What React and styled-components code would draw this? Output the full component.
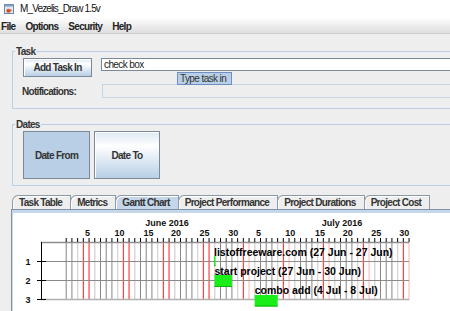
import React from "react";
import styled, { createGlobalStyle } from "styled-components";

const GlobalStyle = createGlobalStyle`
  html, body {
    margin: 0;
    padding: 0;
    background: #eeeeee;
    overflow: hidden;
  }
  body {
    font-family: "Liberation Sans", Arial, sans-serif;
  }
`;

const Window = styled.div`
  width: 450px;
  height: 311px;
  overflow: hidden;
  background: #eeeeee;
  display: flex;
  flex-direction: column;
`;

const TitleBar = styled.div`
  flex: none;
  height: 17px;
  background: #ffffff;
  display: flex;
  align-items: center;
  gap: 6px;
  padding-left: 4px;
  font-size: 10px;
  letter-spacing: -0.85px;
  color: #111;
`;

const MenuBar = styled.div`
  flex: none;
  height: 17px;
  box-sizing: border-box;
  border-bottom: 1px solid #cdcdcd;
  background: linear-gradient(#ffffff 0%, #f7f7f7 25%, #dedede 100%);
  display: flex;
  align-items: center;
  gap: 10px;
  padding: 2px 0 0 1px;
`;

const MenuItem = styled.span`
  font-size: 10px;
  font-weight: bold;
  letter-spacing: -0.7px;
  color: #222;
`;

const Main = styled.div`
  flex: 1;
  display: flex;
  flex-direction: column;
  padding: 12px 0 0 11px;
`;

const Group = styled.fieldset`
  margin: ${(p) => p.$top}px 0 0 1px;
  padding: ${(p) => p.$padTop}px 0 ${(p) => p.$padBottom}px 2px;
  width: 460px;
  min-width: 0;
  border: 1px solid #b8cfe5;
  box-sizing: border-box;
`;

const Legend = styled.legend`
  padding: 0 1px;
  margin-left: 0;
  font-size: 10px;
  line-height: 11px;
  font-weight: bold;
  letter-spacing: -0.7px;
  color: #333;
`;

const Row = styled.div`
  display: flex;
  align-items: ${(p) => p.$align || "flex-start"};
  gap: ${(p) => p.$gap || 0}px;
  padding-left: ${(p) => p.$indent}px;
  margin-top: ${(p) => p.$top || 0}px;
`;

const Button = styled.div`
  flex: none;
  width: ${(p) => p.$w}px;
  height: ${(p) => p.$h}px;
  box-sizing: border-box;
  border: 1px solid #7a8a99;
  background: ${(p) =>
    p.$pressed
      ? "#b8cfe5"
      : "linear-gradient(#dde8f3 0%, #ffffff 30%, #b8cfe5 100%)"};
  box-shadow: ${(p) => (p.$pressed ? "none" : "inset 1px 1px 0 #ffffff")};
  display: flex;
  align-items: center;
  justify-content: center;
  font-size: 10px;
  font-weight: bold;
  letter-spacing: -0.7px;
  color: #333;
`;

const FieldWrap = styled.div`
  flex: 1;
  position: relative;
`;

const TextField = styled.div`
  height: 13px;
  box-sizing: border-box;
  border: 1px solid #7a8a99;
  border-right: none;
  background: #ffffff;
  padding-left: 2px;
  font-size: 10px;
  line-height: 11px;
  letter-spacing: -0.6px;
  color: #222;
`;

const Tooltip = styled.div`
  position: absolute;
  left: 76px;
  top: 14px;
  width: 55px;
  height: 13px;
  box-sizing: border-box;
  border: 1px solid #6f8fc4;
  background: #b8cfe5;
  font-size: 10px;
  line-height: 11px;
  letter-spacing: -0.6px;
  padding-left: 2px;
  color: #333;
  white-space: nowrap;
`;

const FieldLabel = styled.span`
  flex: none;
  width: 80px;
  font-size: 10px;
  font-weight: bold;
  letter-spacing: -0.7px;
  color: #333;
`;

const DisabledField = styled.div`
  flex: 1;
  height: 14px;
  box-sizing: border-box;
  border: 1px solid #c4d5e6;
  border-right: none;
  background: #eeeeee;
`;

const TabRow = styled.div`
  display: flex;
  align-items: flex-end;
  margin-top: 9px;
  padding-left: 1px;
  height: 14px;
`;

const Tab = styled.div`
  height: 14px;
  box-sizing: border-box;
  padding: 0 8px 0 6px;
  margin-right: -1px;
  border: 1px solid #8c99a6;
  border-bottom: none;
  border-top-left-radius: 6px 7px;
  background: ${(p) => (p.$active ? "#c3d6ea" : "#eeeeee")};
  box-shadow: inset 1px 1px 0 #ffffff;
  display: flex;
  align-items: center;
  font-size: 10px;
  font-weight: bold;
  letter-spacing: -0.7px;
  color: #333;
  white-space: nowrap;
`;

const TabBody = styled.div`
  flex: 1;
  border-top: 1px solid #7f92a8;
  border-left: 1px solid #7f92a8;
  background: #c6d7e9;
  padding: 3px 0 0 1px;
  width: 460px;
`;

const ChartArea = styled.div`
  background: #ffffff;
  height: 100%;
`;

const AppIcon = () => (
  <svg width="10" height="10" viewBox="0 0 10 10">
    <rect x="0.5" y="0.5" width="9" height="9" fill="#e4ecf6" stroke="#6d87ad" />
    <rect x="0.5" y="0.5" width="9" height="2" fill="#7d9bc8" />
    <path d="M2.5 5.2h4v2.2a1.4 1.4 0 0 1-1.4 1.2H3.9a1.4 1.4 0 0 1-1.4-1.2z" fill="#d2461e" />
    <path d="M6.5 5.8h0.8a0.8 0.8 0 0 1 0 1.4H6.5" fill="none" stroke="#d2461e" strokeWidth="0.7" />
    <path d="M4 3.6c-.4.5.4.7 0 1.2M5.2 3.6c-.4.5.4.7 0 1.2" stroke="#f08a3c" strokeWidth="0.5" fill="none" />
  </svg>
);

const X0 = 66.2;
const DAY = 40 / 7;
const dayX = (i) => X0 + DAY * i;

function lineColor(i) {
  const wd = (3 + i) % 7;
  if (wd === 6) return "#ff1a1a";
  if (wd === 0) return i < 30 ? "#ff1a1a" : "#ffb2b2";
  if (wd === 1 || wd === 5) return "#d6d6d6";
  return "#858585";
}

const dayLabels = [
  ["5", 87.5], ["10", 119.5], ["15", 148.5], ["20", 176], ["25", 204.5], ["30", 233.3],
  ["5", 258.5], ["10", 290.3], ["15", 320], ["20", 347.7], ["25", 376.3], ["30", 404.3],
];

const rows = [261, 280, 299];

const tasks = [
  { label: "listoffreeware.com (27 Jun - 27 Jun)", x: 214, w: 1.5, y: 256, h: 10, base: 255.5 },
  { label: "start project (27 Jun - 30 Jun)", x: 214.5, w: 17.4, y: 275, h: 12, base: 274.5 },
  { label: "combo add (4 Jul - 8 Jul)", x: 254.7, w: 23, y: 295, h: 11.5, base: 294 },
];

const GanttChart = () => {
  const days = Array.from({ length: 61 }, (_, i) => i);
  return (
    <svg width="437" height="98" viewBox="13 213 437 98" style={{ display: "block" }}>
      <g fontFamily="Liberation Sans, Arial, sans-serif" fontWeight="bold" fill="#111">
        <text x="167" y="225.5" fontSize="9" textAnchor="middle">June 2016</text>
        <text x="342" y="225.5" fontSize="9" textAnchor="middle">July 2016</text>
        {dayLabels.map(([t, x], k) => (
          <text key={k} x={x} y="235.5" fontSize="9" textAnchor="middle">{t}</text>
        ))}
      </g>
      {days.map((i) => (
        <line
          key={i}
          x1={dayX(i)}
          x2={dayX(i)}
          y1="242"
          y2="300"
          stroke={lineColor(i)}
          strokeWidth={lineColor(i) === "#d6d6d6" ? 1.4 : 1}
        />
      ))}
      <line x1="41" x2="409" y1="242.5" y2="242.5" stroke="#8e8e8e" strokeWidth="1.6" />
      <line x1="41" x2="409" y1="261.5" y2="261.5" stroke="#8a8a8a" strokeWidth="1" />
      <line x1="41" x2="409" y1="280.5" y2="280.5" stroke="#8a8a8a" strokeWidth="1" />
      <line x1="41" x2="409" y1="299.5" y2="299.5" stroke="#b0b0b0" strokeWidth="1.5" />
      {days.map((i) => (
        <line key={"t" + i} x1={dayX(i)} x2={dayX(i)} y1="238" y2="242" stroke="#000" />
      ))}
      <line x1="41.5" x2="41.5" y1="242" y2="300" stroke="#000" />
      {rows.map((y, k) => (
        <g key={k}>
          <line x1="37" x2="46" y1={y + 0.5} y2={y + 0.5} stroke="#000" />
          <text
            x="28"
            y={y + 3.5}
            fontSize="9"
            fontWeight="bold"
            textAnchor="middle"
            fontFamily="Liberation Sans, Arial, sans-serif"
            fill="#111"
          >
            {k + 1}
          </text>
        </g>
      ))}
      {tasks.map((t) => (
        <g key={t.label}>
          <rect x={t.x} y={t.y} width={t.w} height={t.h} fill="#19ee19" />
          <rect x={t.x} y={t.y + t.h - 1} width={t.w} height="1" fill="#0fb40f" />
          <text
            x={t.x}
            y={t.base}
            fontSize="10.5"
            fontWeight="bold"
            fontFamily="Liberation Sans, Arial, sans-serif"
            fill="#000"
          >
            {t.label}
          </text>
        </g>
      ))}
    </svg>
  );
};

const tabs = [
  "Task Table",
  "Metrics",
  "Gantt Chart",
  "Project Performance",
  "Project Durations",
  "Project Cost",
];

export default function App() {
  return (
    <Window>
      <GlobalStyle />
      <TitleBar>
        <AppIcon />
        <span>M_Vezelis_Draw 1.5v</span>
      </TitleBar>
      <MenuBar>
        <MenuItem>File</MenuItem>
        <MenuItem>Options</MenuItem>
        <MenuItem>Security</MenuItem>
        <MenuItem>Help</MenuItem>
      </MenuBar>
      <Main>
        <Group $top={0} $padTop={1} $padBottom={10}>
          <Legend>Task</Legend>
          <Row $indent={8} $gap={9}>
            <Button $w={69} $h={19}>Add Task In</Button>
            <FieldWrap>
              <TextField>check box</TextField>
              <Tooltip>Type task in</Tooltip>
            </FieldWrap>
          </Row>
          <Row $indent={7} $top={7} $align="center">
            <FieldLabel>Notifications:</FieldLabel>
            <DisabledField />
          </Row>
        </Group>
        <Group $top={10} $padTop={1} $padBottom={6}>
          <Legend>Dates</Legend>
          <Row $indent={8} $gap={4}>
            <Button $w={67} $h={48} $pressed>Date From</Button>
            <Button $w={66} $h={48}>Date To</Button>
          </Row>
        </Group>
        <TabRow>
          {tabs.map((t) => (
            <Tab key={t} $active={t === "Gantt Chart"}>{t}</Tab>
          ))}
        </TabRow>
        <TabBody>
          <ChartArea>
            <GanttChart />
          </ChartArea>
        </TabBody>
      </Main>
    </Window>
  );
}
